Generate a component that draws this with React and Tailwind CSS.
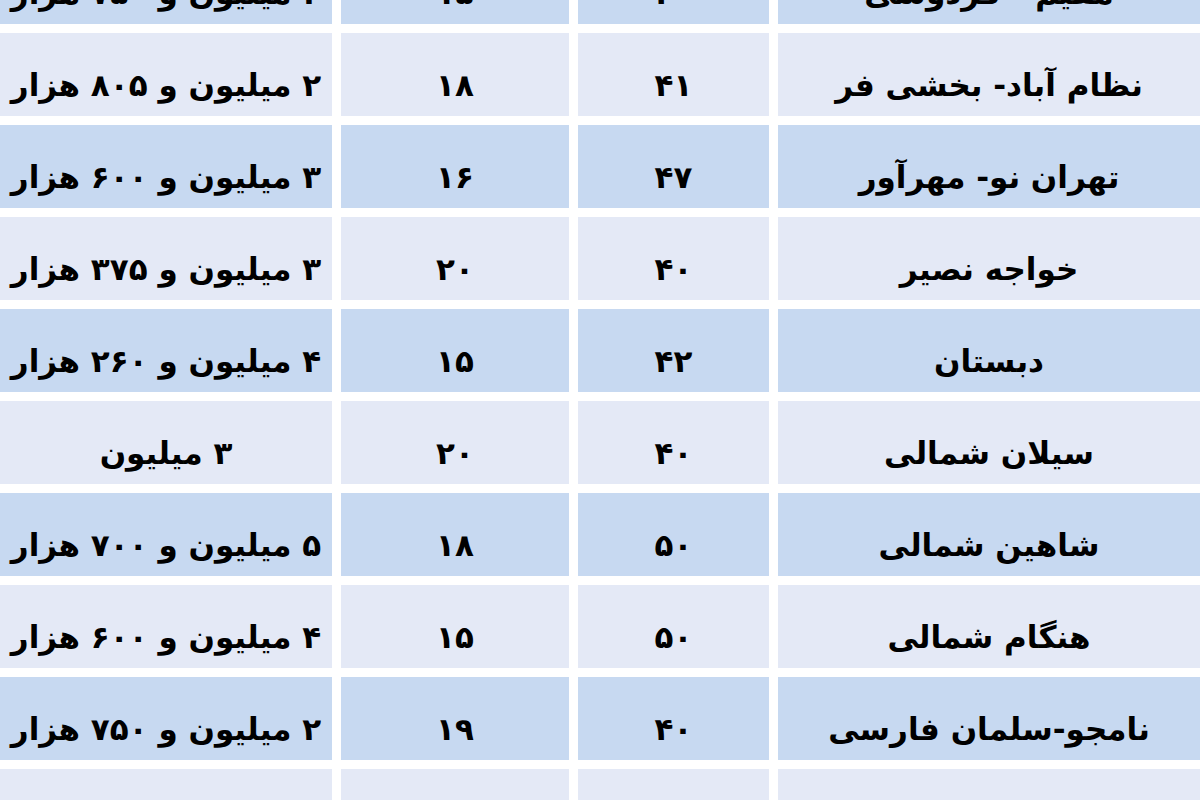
const rows = [
  ['مقیم - فردوسی', '۴۰', '۱۵', '۲ میلیون و ۷۵۰ هزار'],
  ['نظام آباد- بخشی فر', '۴۱', '۱۸', '۲ میلیون و ۸۰۵ هزار'],
  ['تهران نو- مهرآور', '۴۷', '۱۶', '۳ میلیون و ۶۰۰ هزار'],
  ['خواجه نصیر', '۴۰', '۲۰', '۳ میلیون و ۳۷۵ هزار'],
  ['دبستان', '۴۲', '۱۵', '۴ میلیون و ۲۶۰ هزار'],
  ['سیلان شمالی', '۴۰', '۲۰', '۳ میلیون'],
  ['شاهین شمالی', '۵۰', '۱۸', '۵ میلیون و ۷۰۰ هزار'],
  ['هنگام شمالی', '۵۰', '۱۵', '۴ میلیون و ۶۰۰ هزار'],
  ['نامجو-سلمان فارسی', '۴۰', '۱۹', '۲ میلیون و ۷۵۰ هزار'],
  ['جمهوری', '۴۵', '۱۷', '۳ میلیون و ۲۰۰ هزار'],
];

export default function App() {
  return (
    <div className="h-[800px] w-[1200px] overflow-hidden bg-white">
      <div
        dir="rtl"
        className="-mt-[59px] grid grid-cols-[422px_191px_228px_332px] gap-[9px] text-black"
        style={{ fontFamily: '"DejaVu Sans", sans-serif' }}
      >
        {rows.map((row, i) =>
          row.map((cell, j) => (
            <div
              key={i + '-' + j}
              className={
                (i % 2 === 0 ? 'bg-[#c7d9f1]' : 'bg-[#e4e9f6]') +
                ' flex h-[83px] items-center justify-center overflow-hidden whitespace-nowrap pt-[22px] text-[31px] font-bold tracking-[-0.5px]'
              }
            >
              {cell}
            </div>
          ))
        )}
      </div>
    </div>
  );
}
